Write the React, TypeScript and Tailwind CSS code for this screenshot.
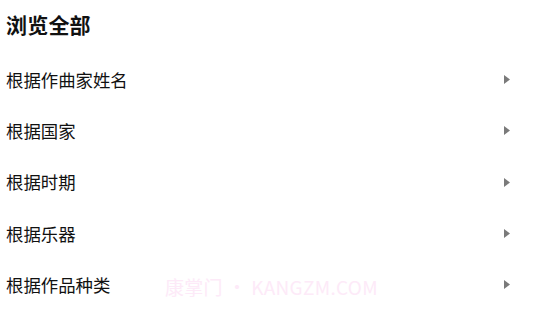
const rows = ["根据作曲家姓名", "根据国家", "根据时期", "根据乐器", "根据作品种类"];

function Caret() {
  return (
    <svg width="6" height="9" viewBox="0 0 6 9" className="shrink-0">
      <path d="M0 0 L6 4.5 L0 9 Z" fill="#7a7a7a" />
    </svg>
  );
}

export default function App() {
  return (
    <div
      className="relative w-[542px] h-[309px] bg-white overflow-hidden text-[#111]"
      style={{ fontFamily: '"Noto Sans CJK SC", "Noto Sans", sans-serif' }}
    >
      <div className="h-[54px] flex items-center pl-[6px] pb-[6px]">
        <h1 className="text-[21px] font-bold leading-none tracking-[0.2px]">浏览全部</h1>
      </div>

      <ul>
        {rows.map((label) => (
          <li
            key={label}
            className="h-[51.25px] flex items-center justify-between pl-[6px] pr-[32px]"
          >
            <span className="text-[17.4px] leading-none">{label}</span>
            <Caret />
          </li>
        ))}
      </ul>

      {/* watermark */}
      <div className="absolute left-[165px] top-[277px] text-[19px] text-[#fdeaf8] leading-none pointer-events-none whitespace-nowrap tracking-[0.3px]">
        康掌门 • KANGZM.COM
      </div>
    </div>
  );
}
